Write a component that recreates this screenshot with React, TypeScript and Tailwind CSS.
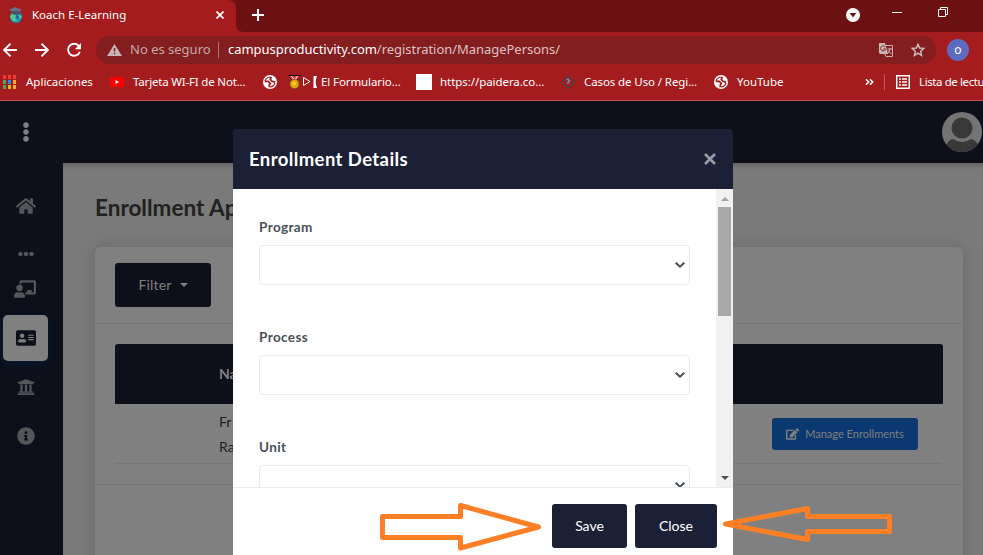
import type { ReactNode } from "react";
import {
  FaHome,
  FaEllipsisH,
  FaEllipsisV,
  FaChalkboardTeacher,
  FaAddressCard,
  FaUniversity,
  FaInfoCircle,
  FaEdit,
} from "react-icons/fa";

function Globe() {
  return (
    <svg className="h-[14px] w-[14px] shrink-0" viewBox="0 0 14 14">
      <circle cx="7" cy="7" r="7" fill="#fff" />
      <path d="M1.800 6.300H5.200L7.300 8.300 6.300 10V12.200" fill="none" stroke="#a51c1f" strokeWidth="1.800" />
      <path d="M8.300 1.800 7.300 4.300 9 6.300 12.200 7.200" fill="none" stroke="#a51c1f" strokeWidth="1.800" />
      <path d="M2 6Q3 2.500 7 2" fill="none" stroke="#a51c1f" strokeWidth="1.200" />
      <path d="M12 8Q11 11.500 7 12" fill="none" stroke="#a51c1f" strokeWidth="1.200" />
    </svg>
  );
}

function TabStrip() {
  return (
    <div className="flex h-8 shrink-0 bg-[#6b1113]">
      <div className="flex h-8 w-[236px] items-center rounded-tr-lg bg-[#a51c1f] pl-[9px] pb-[2px]">
        <svg className="h-4 w-[14px]" viewBox="0 0 14 16">
          <circle cx="7" cy="10" r="6" fill="#1696b4" />
          <path d="M3 6 7 8 6 11 9 14 4 14 1 10ZM9 8 13 9 11 12Z" fill="#53c98c" />
          <path d="M7 8 10 10 8 12Z" fill="#1558a0" />
          <path d="M0 3 6 0 13 3 7 6Z" fill="#6b7186" />
          <path d="M3 4 11 4 11 7 7 8 3 7Z" fill="#48536a" />
        </svg>
        <span className="ml-[9px] w-[184px] text-[11.500px]">Koach E-Learning</span>
        <svg className="h-2 w-2" viewBox="0 0 8 8">
          <path d="M.5.5 7.500 7.500M7.500.5.5 7.500" stroke="#fff" strokeWidth="1.700" />
        </svg>
      </div>
      <div className="relative h-8 w-[610px] bg-[#6b1113]">
        <svg className="absolute bottom-0 left-0 h-2 w-2" viewBox="0 0 8 8">
          <path d="M0 0Q0 8 8 8H0Z" fill="#a51c1f" />
        </svg>
        <svg className="ml-[16px] mt-[9px] h-3 w-3" viewBox="0 0 12 12">
          <path d="M6 0V12M0 6H12" stroke="#fff" strokeWidth="2" />
        </svg>
      </div>
      <svg className="mt-2 h-[14px] w-[14px]" viewBox="0 0 14 14">
        <circle cx="7" cy="7" r="7" fill="#fff" />
        <path d="M3.700 5H10.300L7 9.500Z" fill="#6b1113" />
      </svg>
      <div className="ml-8 mt-3 h-px w-[10px] bg-white" />
      <svg className="ml-[36px] mt-[7px] h-[10px] w-[10px]" viewBox="0 0 10 10">
        <path d="M.5 2.500H7.500V9.500H.5ZM2.500 2V.5H9.500V7.500H8" fill="none" stroke="#fff" />
      </svg>
    </div>
  );
}

function Toolbar() {
  return (
    <div className="flex h-9 shrink-0 items-center bg-[#a51c1f] pl-[3px]">
      <svg className="h-[14px] w-[14px]" viewBox="0 0 14 14">
        <path d="M14 7H1M7.500.7 1.200 7 7.500 13.300" fill="none" stroke="#fff" strokeWidth="1.900" />
      </svg>
      <svg className="ml-[18px] h-[14px] w-[14px]" viewBox="0 0 14 14">
        <path d="M0 7H13M6.500.7 12.800 7 6.500 13.300" fill="none" stroke="#fff" strokeWidth="1.900" />
      </svg>
      <svg className="ml-[18px] h-[14px] w-[14px]" viewBox="0 0 14 14">
        <path d="M12 3.200A6 6 0 1 0 12.800 8.700" fill="none" stroke="#fff" strokeWidth="1.900" />
        <path d="M14 0V6.200H7.800Z" fill="#fff" />
      </svg>
      <div className="ml-[15px] flex h-7 w-[840px] items-center rounded-full bg-[#831d1f] pl-[11px] text-[13px]">
        <svg className="h-3 w-[15px]" viewBox="0 0 15 12">
          <path d="M7.500 0 15 12H0Z" fill="#c5b5b5" />
          <path d="M7.500 4V7.500M7.500 8.700V10.200" stroke="#831d1f" strokeWidth="1.500" />
        </svg>
        <span className="ml-[8px] w-[88px] whitespace-nowrap text-[#c5a9aa]">No es seguro</span>
        <div className="h-4 w-px bg-[#ac7274]" />
        <span className="ml-[9px] w-[651px] whitespace-nowrap tracking-[-0.040px]">
          campusproductivity.com<span className="text-[#dbc3c4]">/registration/ManagePersons/</span>
        </span>
        <svg className="h-[14px] w-[14px]" viewBox="0 0 14 14">
          <path d="M6 2.500H13.500V13.500H7L5.500 10.500" fill="none" stroke="#c5b1b1" />
          <path d="M0 0H6L9 11H1L0 10Z" fill="#c9b7b7" />
          <path d="M6.200 4A2.500 2.500 0 1 0 6.500 6H4.500" fill="none" stroke="#831d1f" />
          <path d="M8.500 6H13M11 5V6Q11 9 8 11M9 7.500 12.500 11" fill="none" stroke="#c9b7b7" />
        </svg>
        <svg className="ml-[18px] h-[14px] w-[14px]" viewBox="0 0 14 14">
          <path d="M7 1.300 8.600 5 12.900 5.400 9.700 8.200 10.600 12.500 7 10.200 3.400 12.500 4.300 8.200 1.100 5.400 5.400 5Z" fill="none" stroke="#d0bfc0" strokeWidth="1.400" />
        </svg>
      </div>
      <div className="ml-[11px] flex h-[22px] w-[22px] items-center justify-center rounded-full bg-[#5c6bc0] text-[12px]">o</div>
    </div>
  );
}

function BookmarkText({ className, children }: { className: string; children: ReactNode }) {
  return <span className={`shrink-0 whitespace-nowrap ${className}`}>{children}</span>;
}

const appColors = ["#f13b30", "#f13b30", "#f13b30", "#45a967", "#2c83f2", "#ecae25", "#45a967", "#d9b72c", "#ecae25"];

function Bookmarks() {
  return (
    <div className="flex h-[33px] shrink-0 items-center overflow-hidden border-b border-[#bd5652] bg-[#a51c1f] pb-[4px] pl-[3px] text-[11.500px]">
      <div className="grid shrink-0 grid-cols-3 gap-x-[2px] gap-y-px">
        {appColors.map((c, i) => (
          <i key={i} className="h-[4px] w-[3px]" style={{ background: c }} />
        ))}
      </div>
      <BookmarkText className="ml-[10px] w-[84px]">Aplicaciones</BookmarkText>
      <svg className="h-[10px] w-[14px] shrink-0" viewBox="0 0 14 10">
        <rect width="14" height="10" rx="2" fill="#f00" />
        <path d="M5.500 3V7L9 5Z" fill="#fff" />
      </svg>
      <BookmarkText className="ml-[9px] w-[130px] tracking-[-0.180px]">Tarjeta WI-FI de Not...</BookmarkText>
      <Globe />
      <svg className="ml-[11px] h-[14px] w-[13px] shrink-0" viewBox="0 0 13 14">
        <path d="M0 0H13L9 6H4Z" fill="#111" />
        <path d="M1 1H4L7 6H5ZM9 1H12L8 6H6Z" fill="#e33" />
        <path d="M4 1H9L7.500 5H5.500Z" fill="#e33" />
        <path d="M3 1H4L6.500 5H5.500ZM9 1H10L7.500 5H6.500Z" fill="#fff" />
        <circle cx="6.500" cy="9" r="4.700" fill="#e5a310" stroke="#704b15" strokeWidth=".7" />
        <circle cx="6" cy="8.500" r="2" fill="#f8cf38" />
      </svg>
      <svg className="ml-[2px] h-3 w-[15px] shrink-0" viewBox="0 0 15 12">
        <path d="M.5 1.500 7 5.500.5 9.500Z" fill="none" stroke="#fff" />
        <path d="M10.500 0H14Q11.500 6 14 12H10.500Z" fill="#fff" />
      </svg>
      <BookmarkText className="ml-[3px] w-[95px] tracking-[-0.100px]">El Formulario...</BookmarkText>
      <div className="h-4 w-4 shrink-0 bg-white" />
      <BookmarkText className="ml-[8px] w-[121px] tracking-[-0.060px]">https://paidera.co...</BookmarkText>
      <svg className="h-[14px] w-[14px] shrink-0" viewBox="0 0 14 14">
        <path d="M7 .5 13.500 7 7 13.500.5 7Z" fill="none" stroke="#4f4048" strokeWidth="1.200" />
        <path d="M5.500 5 7 4 8.500 6 7 7.500V9" fill="none" stroke="#5a9ac0" strokeWidth="1.500" />
      </svg>
      <BookmarkText className="ml-[9px] w-[130px] tracking-[-0.100px]">Casos de Uso / Regi...</BookmarkText>
      <Globe />
      <BookmarkText className="ml-[9px] w-[128px]">YouTube</BookmarkText>
      <svg className="h-[6px] w-[9px] shrink-0" viewBox="0 0 9 6">
        <path d="M1 .3 3.700 3 1 5.700M5 .3 7.700 3 5 5.700" fill="none" stroke="#fff" strokeWidth="1.500" />
      </svg>
      <div className="ml-[10px] h-4 w-px shrink-0 bg-[#c25b5b]" />
      <svg className="ml-[11px] h-[14px] w-[14px] shrink-0" viewBox="0 0 14 14">
        <path d="M.7.7H13.300V13.300H.7ZM3 4H5M6 4H11M3 7H5M6 7H11M3 10H5M6 10H11" fill="none" stroke="#fff" strokeWidth="1.500" />
      </svg>
      <BookmarkText className="ml-[9px] tracking-[-0.400px]">Lista de lectu</BookmarkText>
    </div>
  );
}

function Sidebar() {
  return (
    <div className="flex w-[63px] shrink-0 flex-col bg-[#0d0f1a] text-[#54565b]">
      <FaHome className="ml-4 mt-[34px] h-[18px] w-5" />
      <FaEllipsisH className="ml-[18px] mt-[31px] h-4 w-4" />
      <FaChalkboardTeacher className="ml-[14px] mt-[18px] h-[18px] w-[22px]" />
      <div className="ml-[3px] mt-[17px] flex h-[46px] w-[45px] items-center justify-center rounded-[5px] bg-[#808080] text-[#0d0f1a] shadow-[0_3px_10px_#061936]">
        <FaAddressCard className="h-[18px] w-5" />
      </div>
      <FaUniversity className="ml-[17px] mt-[17px] h-[18px] w-[18px]" />
      <FaInfoCircle className="ml-[17px] mt-[31px] h-[18px] w-[18px]" />
    </div>
  );
}

function PageContent() {
  return (
    <div className="flex min-h-0 grow flex-col bg-[#0d0f1a] font-['Lato',sans-serif]">
      <div className="flex h-[62px] shrink-0 items-center justify-between pl-[17px] pr-px">
        <FaEllipsisV className="h-[20px] w-[18px] text-[#808080]" />
        <svg className="h-10 w-10 rounded-full" viewBox="0 0 40 40">
          <rect width="40" height="40" fill="#747474" />
          <circle cx="20" cy="16" r="10.500" fill="#383838" />
          <path d="M4 34Q6 28 11 27Q20 33 29 27Q34 28 37 34V40H4Z" fill="#383838" />
        </svg>
      </div>
      <div className="flex min-h-0 grow">
        <Sidebar />
        <div className="min-w-0 grow bg-[#7a7a7a] pl-8 pr-5 pt-[28px] shadow-[inset_0_5px_5px_-3px_#606060]">
          <h1 className="h-[56px] text-[22.500px] font-bold leading-[34px] text-[#212121]">Enrollment Ap</h1>
          <div className="h-[330px] rounded-md bg-[#808080] shadow-[0_0_16px_#6b6b6b]">
            <div className="h-[77px] border-b border-[#777] pl-5 pt-4">
              <div className="flex h-11 w-24 items-center justify-center gap-2 rounded-[3px] bg-[#0d0f1a] pb-px text-[14px] tracking-[0.200px] text-[#808080]">
                Filter
                <span className="border-x-4 border-t-4 border-x-transparent border-t-[#808080]" />
              </div>
            </div>
            <div className="h-[161px] border-b border-[#777] px-5 pt-5">
              <div className="flex h-[60px] items-center rounded-t-[3px] bg-[#0d0f1a] pb-px pl-[104px] text-[14px] font-bold text-[#808080]">Na</div>
              <div className="mr-[2px] flex h-[60px] items-center justify-between border-b border-[#777] pl-[104px] pr-[23px] text-[14px] leading-[25px] text-[#212121]">
                <span>Fr<br />Ra</span>
                <div className="flex h-8 w-[146px] items-center justify-center gap-[6px] rounded-[3px] bg-[#0b3870] text-[11px] text-[#808080]">
                  <FaEdit className="h-3 w-[13px]" />
                  Manage Enrollments
                </div>
              </div>
            </div>
          </div>
        </div>
      </div>
    </div>
  );
}

function Field({ label }: { label: string }) {
  return (
    <div className="h-[110px]">
      <div className="mb-[8px] h-5 text-[13.500px] font-bold leading-5 tracking-[0.400px] text-[#495057]">{label}</div>
      <div className="flex h-10 items-center justify-end rounded border border-[#e9ebef] bg-white pr-1">
        <svg className="h-[6px] w-[10px]" viewBox="0 0 10 6">
          <path d="M.7.7 5 4.700 9.300.7" fill="none" stroke="#495057" strokeWidth="2" />
        </svg>
      </div>
    </div>
  );
}

function Modal() {
  return (
    <div className="absolute left-[233px] top-[129px] flex h-[426px] w-[500px] flex-col rounded-t bg-[#1b2036] font-['Lato',sans-serif]">
      <div className="flex h-[60px] shrink-0 items-center justify-between pl-4 pr-[17px] text-[18.500px] font-bold tracking-[0.400px]">
        <span className="pt-[2px]">Enrollment Details</span>
        <svg className="h-3 w-3" viewBox="0 0 12 12">
          <path d="M1 1 11 11M11 1 1 11" stroke="#999ba4" strokeWidth="2.700" />
        </svg>
      </div>
      <div className="flex h-[298px] shrink-0 overflow-hidden bg-white">
        <div className="w-[483px] pl-[26px] pr-[26px] pt-[28px]">
          <Field label="Program" />
          <Field label="Process" />
          <Field label="Unit" />
        </div>
        <div className="flex w-[17px] flex-col items-center bg-[#f1f1f1]">
          <div className="mt-[8px] border-x-[4px] border-b-4 border-x-transparent border-b-[#a3a3a3]" />
          <div className="mt-[6px] h-[109px] w-[13px] bg-[#a8a8a8]" />
          <div className="mt-auto mb-[7px] border-x-[4px] border-t-4 border-x-transparent border-t-[#505050]" />
        </div>
      </div>
      <div className="flex grow justify-end gap-2 border-t border-[#e9ecef] bg-white pr-4 pt-4 text-[14px]">
        <div className="flex h-11 w-[75px] items-center justify-center rounded-[3px] bg-[#1b2036] pb-px">Save</div>
        <div className="flex h-11 w-[82px] items-center justify-center rounded-[3px] bg-[#1b2036] pb-px">Close</div>
      </div>
    </div>
  );
}

export default function App() {
  return (
    <div className="relative flex h-[555px] w-[983px] flex-col overflow-hidden font-['Noto_Sans',sans-serif] text-white">
      <TabStrip />
      <Toolbar />
      <Bookmarks />
      <PageContent />
      <Modal />
      <svg className="absolute left-[378px] top-[500px] h-[55px] w-[516px]" viewBox="378 500 516 55" fill="none" stroke="#ff7f27" strokeWidth="5" strokeLinejoin="round">
        <path d="M382.500 516.500H460.500V505.500L538.500 527 460.500 548V537.500H382.500Z" />
        <path d="M889.500 516.500H807.500V508.500L725.500 524 807.500 539.500V531.500H889.500Z" />
      </svg>
    </div>
  );
}
